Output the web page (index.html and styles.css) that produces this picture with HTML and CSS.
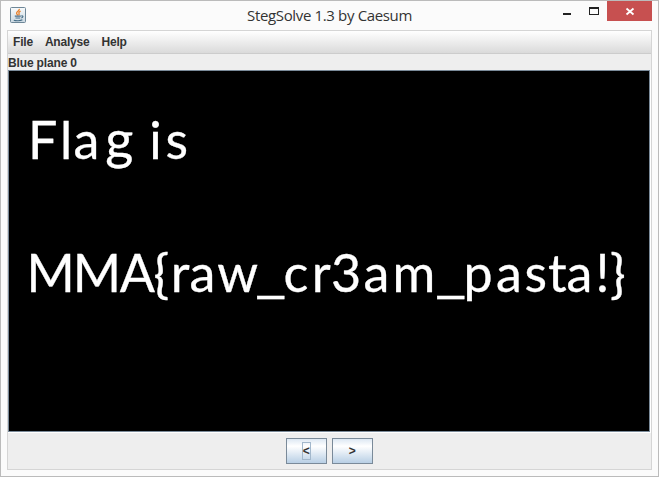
FILE: index.html
```
<!DOCTYPE html>
<html lang="en">
<head>
<meta charset="utf-8">
<title>StegSolve 1.3 by Caesum</title>
<link rel="stylesheet" href="styles.css">
</head>
<body>
<div class="window">
  <header class="titlebar">
    <svg class="java" width="16" height="16" viewBox="0 0 16 16" aria-hidden="true">
      <defs><linearGradient id="tile" x2="0" y2="1"><stop stop-color="#f8fafb"/><stop offset="1" stop-color="#cbd9e2"/></linearGradient></defs>
      <rect x=".5" y=".5" width="15" height="15" rx="1" fill="url(#tile)" stroke="#6e8798"/>
      <path d="M9.3 1.8C9.8 4 6.4 4.4 6.6 6.2C6.7 7 7.5 7.5 7.8 8.5M10.6 4.2C8.8 5 8.5 5.7 9.1 6.5C9.5 7.3 9 7.8 8.6 8.3" fill="none" stroke="#e8812c" stroke-width="1.3"/>
      <path d="M4.8 9.1H10.8M5.5 11H10.2M3.8 13.2C6 14 10.5 13.9 12.4 12.8M11.3 9C13.7 8.3 13.3 10.5 11.3 11" fill="none" stroke="#496f89" stroke-width="1.1"/>
    </svg>
    <h1>StegSolve 1.3 by Caesum</h1>
    <div class="controls">
      <svg width="112" height="20" viewBox="0 0 112 20" aria-hidden="true">
        <path d="M17 12h8v2h-8z" fill="#222"/>
        <path fill="#222" fill-rule="evenodd" d="M43 6h10v8H43zM44 8v5h8V8z"/>
        <path d="M61 0h45v20H61z" fill="#c75050"/>
        <path d="M80.5 7.5L87.5 13.5M87.5 7.5L80.5 13.5" stroke="#fff" stroke-width="1.8"/>
      </svg>
    </div>
  </header>
  <main class="frame">
    <nav class="menu"><span>File</span><span>Analyse</span><span>Help</span></nav>
    <div class="plane">Blue plane 0</div>
    <div class="view">
      <svg class="picture" width="640" height="360" viewBox="9 71 640 360">
        <text y="158.5" x="28 60 73.6 105.2 149.2 165.4">Fla<tspan class="wide">g</tspan>is</text>
        <text y="291.5" x="26.4 72.8 119.8 153.5 170.8 189.4 217.2 256.4 283.6 311.8 331 363.4 392.6 436.4 463.5 495.9 524.4 548 566.4 595.5 610">MMA{raw<tspan class="rule">_</tspan>cr3am<tspan class="rule">_</tspan>pasta!}</text>
      </svg>
    </div>
    <footer class="buttons"><button><span class="focus">&lt;</span></button><button><span>&gt;</span></button></footer>
  </main>
</div>
</body>
</html>
```
FILE: styles.css
```
* { box-sizing: border-box; }
body { margin: 0; overflow: hidden; }
.window { width: 659px; height: 477px; padding: 0 6px 6px; border: 1px solid #bbb; background: #fbfbfb; font-family: "Liberation Sans", Arial, sans-serif; }
.titlebar { display: grid; grid-template-columns: 112px 1fr 112px; height: 29px; margin-right: -6px; align-items: start; }
.java { margin: 6px 0 0 3px; }
h1 { margin: 4px 0 0; padding-right: 6px; color: #333; font: 15px/20px "Open Sans", "Noto Sans", sans-serif; letter-spacing: -.35px; text-align: center; white-space: nowrap; }
.controls { height: 20px; }
.controls svg { display: block; }
.frame { width: 645px; height: 440px; border: 1px solid #d5d5d5; background: #eee; }
.menu { display: flex; gap: 12px; height: 23px; padding-left: 5px; border-bottom: 1px solid #ccc; background: linear-gradient(#fff, #dadada); font: bold 12px/22px "Liberation Sans", sans-serif; letter-spacing: -.2px; color: #333; }
.plane { height: 16px; color: #333; font: bold 12px/18px "Liberation Sans", sans-serif; letter-spacing: -.15px; }
.view { width: 643px; height: 363px; padding-right: 1px; border-bottom: 1px solid #fff; background: #fff; }
.picture { display: block; width: 642px; height: 362px; border: 1px solid #7a8a99; background: #000; }
.picture text { fill: #fff; stroke: #fff; stroke-width: .3px; font-family: Lato, sans-serif; font-size: 52px; }
.picture .wide { font-size: 54px; }
.picture .rule { font-family: "Noto Sans CJK JP", sans-serif; font-size: 51px; }
.buttons { display: flex; justify-content: center; gap: 5px; padding: 5px 0 0; }
button { width: 41px; height: 26px; padding: 0; border: 1px solid #7a8a99; border-radius: 0; background: linear-gradient(#dde8f3, #fff 30%, #b8cfe5); color: #333; font: bold 12px/16px "Liberation Sans", sans-serif; }
button span { display: inline-block; width: 9px; height: 18px; border: 1px solid transparent; text-indent: -.5px; }
button .focus { border-color: #a3b8cc; }
```
